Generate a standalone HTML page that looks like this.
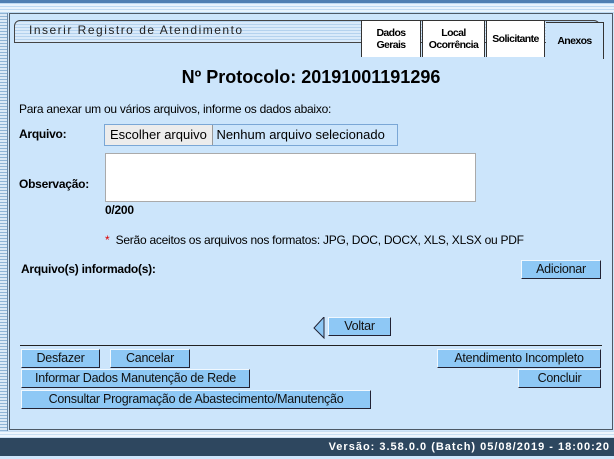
<!DOCTYPE html><html><head><meta charset="utf-8"><style>
*{margin:0;padding:0;box-sizing:border-box}
body{width:614px;height:459px;overflow:hidden;background:#cfe6fb;font-family:"Liberation Sans",Arial,sans-serif;font-size:12px;color:#000;position:relative;letter-spacing:-.25px}
.a{position:absolute}
.top{left:0;top:0;width:614px;height:13px;background:repeating-linear-gradient(#bcd9f2 0 1px,#e8f3fc 1px 3px);border-top:3px solid #4e7fb2}
.side{left:0;top:13px;width:8px;height:418px;background:repeating-linear-gradient(#8fb4d6 0 1px,#dbe9f6 1px 3px);border-right:1px solid #6e8aa6}
.main{left:9px;top:13px;width:604px;height:417px;background:#cce5fb;border:1px solid #4c5966}
.title{left:14px;top:20px;width:586px;height:23px;border:1px solid #444;border-radius:6px 6px 0 0;background:repeating-linear-gradient(#b4d2ee 0 1px,#d9eafa 1px 3px);font-size:12px;letter-spacing:1.5px;color:#222;padding:2px 0 0 14px}
.tab{top:20px;height:37px;background:#fff;border:1px solid #333;border-bottom:none;font-family:"Liberation Sans",sans-serif;font-weight:bold;font-size:10.5px;text-align:center;line-height:12px;display:flex;align-items:center;justify-content:center;letter-spacing:-.6px;white-space:nowrap}
.btn{background:#8ec8f5;border:1px solid #f0f8ff;border-right-color:#223;border-bottom-color:#223;height:19px;font-size:12.5px;text-align:center;line-height:17px;color:#111}
.b{font-weight:bold}
</style></head><body>
<div class="a top"></div><div class="a side"></div>
<div class="a main"></div>
<div class="a title">Inserir Registro de Atendimento</div>
<div class="a tab" style="left:361px;width:60px">Dados<br>Gerais</div>
<div class="a tab" style="left:422px;width:63px">Local<br>Ocorrência</div>
<div class="a tab" style="left:486px;width:59px">Solicitante</div>
<div class="a tab" style="left:546px;width:58px;background:#cce5fb;border-left:none;top:22px">Anexos</div>
<div class="a b" style="left:0;width:622px;top:67px;text-align:center;font-size:18px;letter-spacing:0">Nº Protocolo: 20191001191296</div>
<div class="a" style="left:19px;top:102px">Para anexar um ou vários arquivos, informe os dados abaixo:</div>
<div class="a b" style="left:19px;top:127px">Arquivo:</div>
<div class="a" style="left:104px;top:124px;width:294px;height:22px;border:1px solid #7aa7d6;background:#cce5fb;font-size:13px;line-height:20px;letter-spacing:0"><span style="display:inline-block;background:#ececec;border-right:1px solid #999;padding:0 5px;height:20px">Escolher arquivo</span> Nenhum arquivo selecionado</div>
<div class="a b" style="left:19px;top:177px">Observação:</div>
<div class="a" style="left:105px;top:153px;width:371px;height:49px;background:#fff;border:1px solid #aaa"></div>
<div class="a b" style="left:105px;top:203px">0/200</div>
<div class="a" style="left:105px;top:233px"><span style="color:#d00">*</span>&nbsp; Serão aceitos os arquivos nos formatos: JPG, DOC, DOCX, XLS, XLSX ou PDF</div>
<div class="a b" style="left:21px;top:262px">Arquivo(s) informado(s):</div>
<div class="a btn" style="left:521px;top:260px;width:80px">Adicionar</div>
<svg class="a" style="left:313px;top:317px" width="12" height="22"><path d="M11 0L1 11L11 21Z" fill="#8ec8f5" stroke="#223"/></svg>
<div class="a btn" style="left:328px;top:317px;width:63px">Voltar</div>
<div class="a" style="left:20px;top:345px;width:582px;height:1px;background:#222"></div>
<div class="a btn" style="left:21px;top:349px;width:79px">Desfazer</div>
<div class="a btn" style="left:110px;top:349px;width:80px">Cancelar</div>
<div class="a btn" style="left:437px;top:349px;width:164px">Atendimento Incompleto</div>
<div class="a btn" style="left:21px;top:369px;width:229px">Informar Dados Manutenção de Rede</div>
<div class="a btn" style="left:518px;top:369px;width:83px">Concluir</div>
<div class="a btn" style="left:21px;top:390px;width:350px">Consultar Programação de Abastecimento/Manutenção</div>
<div class="a" style="left:0;top:431px;width:614px;height:7px;background:repeating-linear-gradient(#c9dff2 0 1px,#eef6fd 1px 3px)"></div>
<div class="a" style="left:0;top:438px;width:614px;height:18px;background:#2e475f;color:#fff;font-weight:bold;font-size:11px;letter-spacing:1px;text-align:right;padding-right:4px;line-height:18px">Versão: 3.58.0.0 (Batch) 05/08/2019 - 18:00:20</div>
<div class="a" style="left:0;top:456px;width:614px;height:3px;background:#cfe6fb"></div>
</body></html>
